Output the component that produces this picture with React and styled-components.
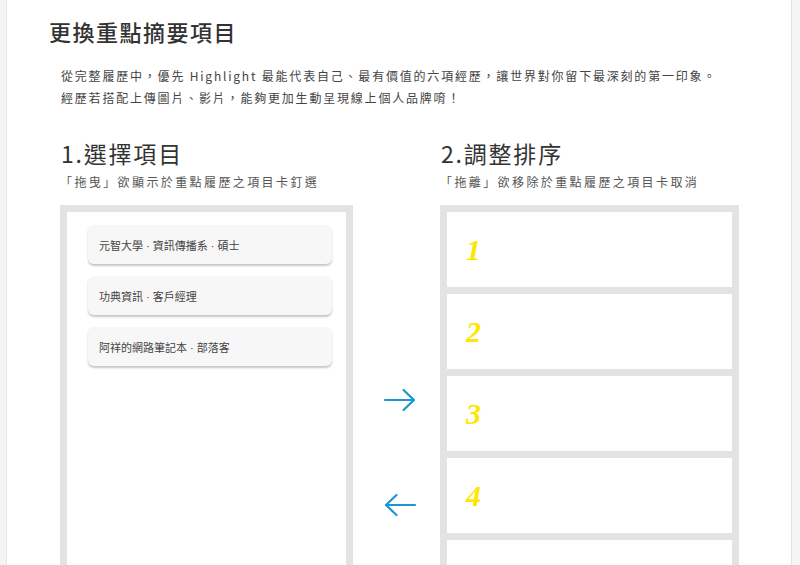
import React from "react";
import styled, { createGlobalStyle } from "styled-components";

const GlobalStyle = createGlobalStyle`
  html, body {
    margin: 0;
    padding: 0;
    height: 100%;
    overflow: hidden;
    background: #ffffff;
  }
  body {
    font-family: "Noto Sans CJK TC", "Noto Sans", sans-serif;
    color: #333;
  }
`;

const Frame = styled.div`
  display: flex;
  height: 565px;
  .side-left {
    width: 6px;
    background: #f4f4f4;
    border-right: 1px solid #e6e6e6;
  }
  .side-right {
    width: 8px;
    background: #f5f5f5;
    border-left: 1px solid #e4e4e4;
  }
`;

const Main = styled.div`
  flex: 1;
  background: #fff;
  padding: 15px 0 0 42px;
  overflow: hidden;
`;

const Title = styled.h1`
  margin: 0;
  font-size: 22px;
  line-height: 32px;
  font-weight: 500;
  letter-spacing: 1.5px;
  color: #333;
`;

const Intro = styled.div`
  margin: 18px 0 0 12px;
  p {
    margin: 0;
    font-size: 12px;
    line-height: 22px;
    letter-spacing: 1.8px;
    color: #444;
  }
`;

const Columns = styled.div`
  display: grid;
  grid-template-columns: 293px 87px 299px;
  margin: 30px 0 0 11px;
`;

const Column = styled.div`
  display: flex;
  flex-direction: column;
  h2 {
    margin: 0 0 0 1px;
    font-size: 23px;
    line-height: 28px;
    font-weight: 400;
    letter-spacing: 1.8px;
    color: #333;
  }
  h3 {
    margin: 7px 0 0 0;
    font-size: 12px;
    line-height: 16px;
    font-weight: 400;
    letter-spacing: 2.4px;
    color: #555;
  }
`;

const Box = styled.div`
  margin-top: 15px;
  height: 400px;
  border: 7px solid #e3e3e3;
  border-bottom: none;
  background: ${(p) => (p.$slots ? "#e3e3e3" : "#fff")};
  display: flex;
  flex-direction: column;
  gap: ${(p) => (p.$slots ? "7px" : "12px")};
  padding: ${(p) => (p.$slots ? "0" : "13px 14px 0 21px")};
`;

const Card = styled.div`
  height: 39px;
  display: flex;
  align-items: center;
  padding-left: 11px;
  background: #f7f7f7;
  border-radius: 6px;
  box-shadow: 0 2px 2px rgba(0, 0, 0, 0.22);
  font-family: "Liberation Sans", "Noto Sans CJK TC", sans-serif;
  font-size: 11px;
  color: #444;
`;

const Slot = styled.div`
  flex: 0 0 75px;
  background: #fff;
  display: flex;
  align-items: center;
  padding-left: 19px;
  font-family: "Liberation Serif", "Times New Roman", serif;
  font-style: italic;
  font-weight: 700;
  font-size: 30px;
  color: #ffe600;
`;

const Arrows = styled.div`
  display: flex;
  flex-direction: column;
  align-items: center;
  padding: 249px 0 0 6px;
  gap: 81px;
`;

const Arrow = ({ left }) => (
  <svg width="34" height="24" viewBox="0 0 34 24" fill="none">
    <g
      stroke="#1b95d6"
      strokeWidth="2.2"
      strokeLinecap="round"
      strokeLinejoin="round"
      transform={left ? "translate(34 0) scale(-1 1)" : undefined}
    >
      <path d="M2 12 H31" />
      <path d="M20.5 2 L31 12 L20.5 22" />
    </g>
  </svg>
);

const picks = [
  "元智大學 · 資訊傳播系 · 碩士",
  "功典資訊 · 客戶經理",
  "阿祥的網路筆記本 · 部落客",
];

export default function App() {
  return (
    <>
      <GlobalStyle />
      <Frame>
        <div className="side-left" />
        <Main>
          <Title>更換重點摘要項目</Title>
          <Intro>
            <p>從完整履歷中，優先 Highlight 最能代表自己、最有價值的六項經歷，讓世界對你留下最深刻的第一印象。</p>
            <p>經歷若搭配上傳圖片、影片，能夠更加生動呈現線上個人品牌唷！</p>
          </Intro>
          <Columns>
            <Column>
              <h2>1.選擇項目</h2>
              <h3>「拖曳」欲顯示於重點履歷之項目卡釘選</h3>
              <Box>
                {picks.map((t) => (
                  <Card key={t}>{t}</Card>
                ))}
              </Box>
            </Column>
            <Arrows>
              <Arrow />
              <Arrow left />
            </Arrows>
            <Column>
              <h2>2.調整排序</h2>
              <h3>「拖離」欲移除於重點履歷之項目卡取消</h3>
              <Box $slots>
                {[1, 2, 3, 4, 5].map((n) => (
                  <Slot key={n}>{n < 5 ? n : ""}</Slot>
                ))}
              </Box>
            </Column>
          </Columns>
        </Main>
        <div className="side-right" />
      </Frame>
    </>
  );
}
